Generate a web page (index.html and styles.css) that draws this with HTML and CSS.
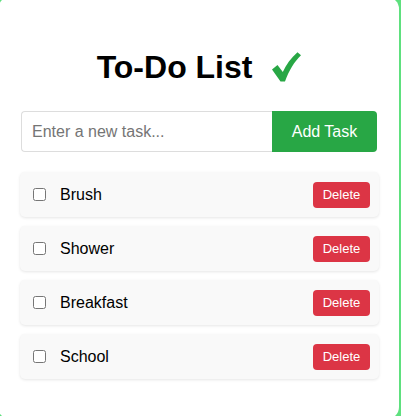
FILE: index.html
```html
<!DOCTYPE html>
<html>
<head>
<meta charset="utf-8">
<link rel="stylesheet" href="styles.css">
</head>
<body>
<div class="card">
  <h1 class="title">To-Do List <svg class="check" width="30" height="30" viewBox="0 0 30 30"><path d="M1 17.5 L6.5 13 L11.8 20 C15 13 20 6 26.5 0.3 L30 3.3 C23.5 9.5 18 18.5 14 29.5 L9.5 29.5 Z" fill="#28a745"/></svg></h1>
  <div class="add-row">
    <input class="task-input" type="text" placeholder="Enter a new task...">
    <button class="add-btn">Add Task</button>
  </div>
  <ul class="tasks">
    <li class="task"><input type="checkbox" class="cb"><span class="label">Brush</span><button class="del">Delete</button></li>
    <li class="task"><input type="checkbox" class="cb"><span class="label">Shower</span><button class="del">Delete</button></li>
    <li class="task"><input type="checkbox" class="cb"><span class="label">Breakfast</span><button class="del">Delete</button></li>
    <li class="task"><input type="checkbox" class="cb"><span class="label">School</span><button class="del">Delete</button></li>
  </ul>
</div>
</body>
</html>
```
FILE: styles.css
```css
html, body {
  margin: 0;
  padding: 0;
}
body {
  background: #5ee07e;
  font-family: "Liberation Sans", Arial, sans-serif;
  overflow: hidden;
  height: 416px;
}
.card {
  box-sizing: border-box;
  width: 401px;
  height: 422px;
  margin: -3px 0 0 -2px;
  background: #fff;
  border-radius: 12px;
  padding: 52px 22px 0 23px;
}
.title {
  margin: 0;
  text-align: center;
  font-size: 32px;
  font-weight: bold;
  line-height: 37px;
  height: 37px;
  color: #000;
}
.check {
  margin-left: 10px;
  vertical-align: -4px;
}
.add-row {
  display: flex;
  margin-top: 25px;
  height: 41px;
}
.task-input {
  box-sizing: border-box;
  flex: 1;
  height: 41px;
  border: 1px solid #ddd;
  border-right: none;
  border-radius: 4px 0 0 4px;
  padding: 0 10px;
  font-family: inherit;
  font-size: 16px;
  outline: none;
}
.task-input::placeholder {
  color: #757575;
}
.add-btn {
  width: 105px;
  height: 41px;
  border: none;
  background: #28a745;
  color: #fff;
  font-family: inherit;
  font-size: 16px;
  border-radius: 0 4px 4px 0;
  padding: 0;
}
.tasks {
  list-style: none;
  margin: 20px 0 0 -1px;
  padding: 0;
  width: 359px;
}
.task {
  display: flex;
  align-items: center;
  height: 45px;
  margin-bottom: 9px;
  background: #f9f9f9;
  border-radius: 5px;
  box-shadow: 0 1px 3px rgba(0,0,0,0.1);
  padding: 0 9px 0 13px;
}
.cb {
  width: 13px;
  height: 13px;
  margin: 0 14px 0 0;
}
.label {
  flex: 1;
  font-size: 16px;
  color: #000;
}
.del {
  width: 57px;
  height: 26px;
  border: none;
  border-radius: 4px;
  background: #dc3545;
  color: #fff;
  font-family: inherit;
  font-size: 13px;
  padding: 0;
}
```
